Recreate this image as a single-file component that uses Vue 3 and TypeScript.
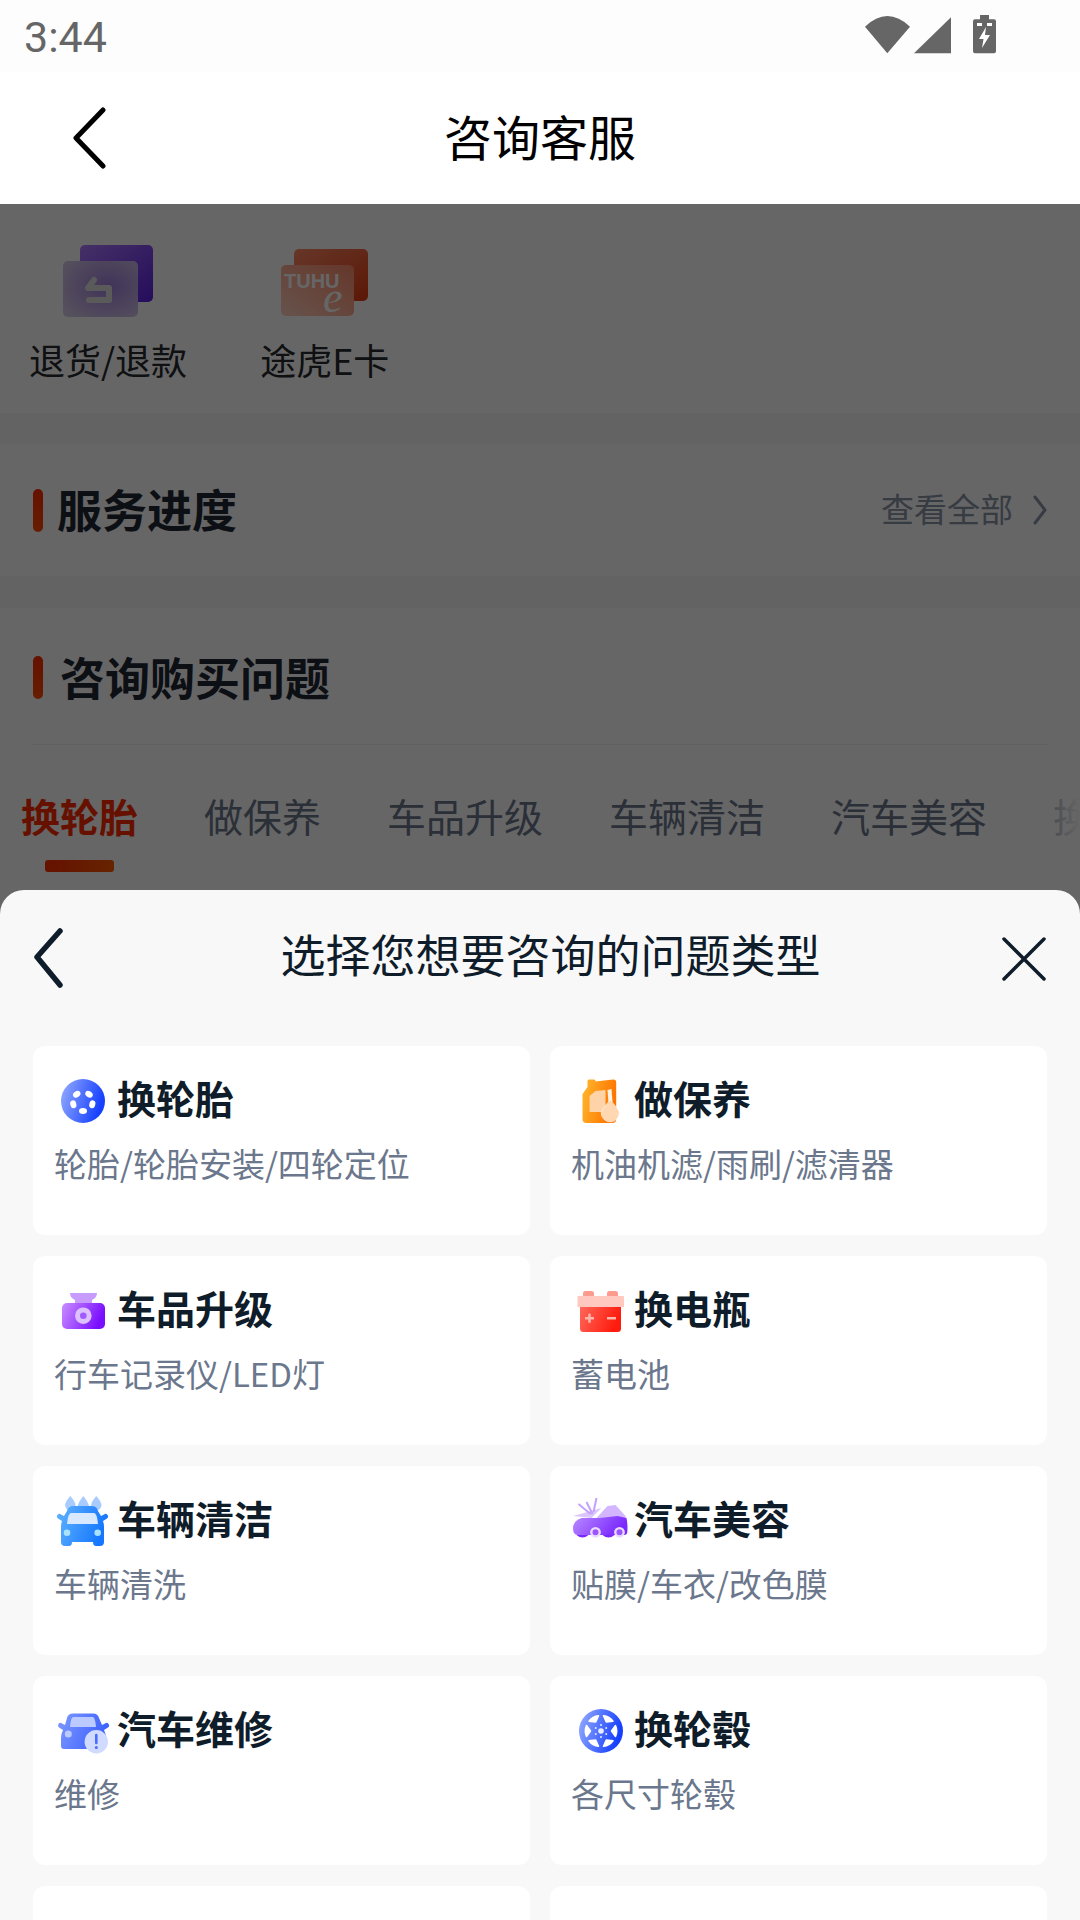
<script setup lang="ts">
const tabs: string[] = ['换轮胎', '做保养', '车品升级', '车辆清洁', '汽车美容', '换电瓶']
interface Category { key: string; title: string; sub: string }
const categories: Category[] = [
  { key: 'tire', title: '换轮胎', sub: '轮胎/轮胎安装/四轮定位' },
  { key: 'oil', title: '做保养', sub: '机油机滤/雨刷/滤清器' },
  { key: 'camera', title: '车品升级', sub: '行车记录仪/LED灯' },
  { key: 'battery', title: '换电瓶', sub: '蓄电池' },
  { key: 'wash', title: '车辆清洁', sub: '车辆清洗' },
  { key: 'beauty', title: '汽车美容', sub: '贴膜/车衣/改色膜' },
  { key: 'repair', title: '汽车维修', sub: '维修' },
  { key: 'rim', title: '换轮毂', sub: '各尺寸轮毂' },
  { key: 'none', title: '', sub: '' },
  { key: 'none2', title: '', sub: '' }
]
</script>

<template>
  <div class="phone">
    <header class="status">
      <span class="time">3:44</span>
      <svg class="status-icons" width="131" height="40" viewBox="0 0 131 40">
        <path d="M0 11.7 Q22.3 -9.5 45 11.7 L22.3 38.3 Z" fill="#666" />
        <path d="M49 38.3 L86 2.3 V38.3 Z" fill="#666" />
        <path d="M115 0 h9 v4.3 h5 q2 0 2 2 v30 q0 2 -2 2 h-19 q-2 0 -2 -2 v-30 q0 -2 2 -2 h5 Z" fill="#666" />
        <path d="M112 8 h5 v3 h-5 Z M122 8 h5 v3 h-5 Z" fill="#fff" />
        <path d="M121 12 L114 24 H118.500 L117 33 L125 20 H120 Z" fill="#fff" />
      </svg>
    </header>

    <nav class="nav">
      <svg class="nav-back" width="34" height="62" viewBox="0 0 34 62">
        <path d="M31 3 L4 31 L31 59" fill="none" stroke="#000" stroke-width="5" stroke-linecap="round" stroke-linejoin="round" />
      </svg>
      <h1 class="nav-title">咨询客服</h1>
    </nav>

    <main class="content">
      <section class="quick">
        <div class="quick-item">
          <svg class="quick-icon" width="100" height="80" viewBox="8 0 100 80">
            <defs>
              <linearGradient id="refundBack" x1="0" y1="0" x2="1" y2="1">
                <stop offset="0" stop-color="#b07aff" />
                <stop offset="1" stop-color="#5a20e6" />
              </linearGradient>
              <radialGradient id="refundFront" cx="0.6" cy="0.45" r="0.75">
                <stop offset="0" stop-color="#a27fe0" />
                <stop offset="1" stop-color="#d8cde8" />
              </radialGradient>
            </defs>
            <rect x="30" y="2" width="73" height="57" rx="5" fill="url(#refundBack)" />
            <rect x="13" y="18" width="75" height="56" rx="5" fill="url(#refundFront)" />
            <path d="M44 37 L38 45 H59 V57 H39" fill="none" stroke="#e4e0e4" stroke-width="6" stroke-linecap="round" stroke-linejoin="round" />
          </svg>
          <span>退货/退款</span>
        </div>
        <div class="quick-item">
          <svg class="quick-icon" width="100" height="80" viewBox="5 0 100 80">
            <defs>
              <linearGradient id="ecardBack" x1="0" y1="0" x2="1" y2="1">
                <stop offset="0" stop-color="#ff8a66" />
                <stop offset="1" stop-color="#e63a10" />
              </linearGradient>
              <linearGradient id="ecardFront" x1="1" y1="0" x2="0" y2="1">
                <stop offset="0" stop-color="#ff8a6a" />
                <stop offset="1" stop-color="#ffd0c0" />
              </linearGradient>
            </defs>
            <rect x="24" y="6" width="74" height="52" rx="5" fill="url(#ecardBack)" />
            <rect x="11" y="22" width="73" height="51" rx="5" fill="url(#ecardFront)" />
            <text x="14" y="45" class="tuhu">TUHU</text>
            <text x="53" y="69" class="tuhu-e">e</text>
          </svg>
          <span>途虎E卡</span>
        </div>
      </section>

      <section class="progress">
        <div class="heading">
          <i class="mark"></i>
          <h2>服务进度</h2>
        </div>
        <div class="more">
          <span>查看全部</span>
          <svg width="14" height="30" viewBox="0 0 14 30">
            <path d="M2 2 L12 15 L2 28" fill="none" stroke="#8a94a6" stroke-width="3" stroke-linecap="round" stroke-linejoin="round" />
          </svg>
        </div>
      </section>

      <section class="consult">
        <div class="heading consult-heading">
          <i class="mark"></i>
          <h2>咨询购买问题</h2>
        </div>
        <div class="tabs">
          <div v-for="(tab, i) in tabs" :key="tab" class="tab" :class="{ active: i === 0 }">
            <span>{{ tab }}</span>
            <i v-if="i === 0" class="tab-bar"></i>
          </div>
          <div class="tabs-fade"></div>
        </div>
      </section>

      <div class="scrim"></div>

      <aside class="sheet">
        <div class="sheet-head">
          <svg width="30" height="60" viewBox="0 0 30 60">
            <path d="M27 3 L4 29 L27 57" fill="none" stroke="#0f1c2a" stroke-width="5.500" stroke-linecap="round" stroke-linejoin="round" />
          </svg>
          <h3>选择您想要咨询的问题类型</h3>
          <svg width="44" height="44" viewBox="0 0 44 44">
            <path d="M2 2 L42 42 M42 2 L2 42" fill="none" stroke="#0f1c2a" stroke-width="3.500" stroke-linecap="round" />
          </svg>
        </div>

        <div class="grid">
          <article v-for="c in categories" :key="c.key" class="card">
            <div v-if="c.title" class="card-row">
              <svg class="card-icon" width="64" height="60" viewBox="0 0 64 60">
                <defs>
                  <linearGradient :id="'g-' + c.key" x1="0" y1="0" x2="1" y2="0.300">
                    <stop offset="0" :stop-color="c.key === 'oil' ? '#ffb92e' : c.key === 'camera' ? '#c98fff' : c.key === 'battery' ? '#ff6a5c' : c.key === 'wash' ? '#62b4ff' : c.key === 'beauty' ? '#b98aff' : c.key === 'repair' ? '#7f9bff' : '#98aeff'" />
                    <stop offset="1" :stop-color="c.key === 'oil' ? '#ff7400' : c.key === 'camera' ? '#7a0eff' : c.key === 'battery' ? '#ff1c0e' : c.key === 'wash' ? '#1577ff' : c.key === 'beauty' ? '#7a28ff' : c.key === 'repair' ? '#3e62ff' : '#1640ff'" />
                  </linearGradient>
                </defs>

                <g v-if="c.key === 'tire'">
                  <circle cx="29" cy="31" r="22" :fill="'url(#g-' + c.key + ')'" />
                  <g fill="#fff">
                    <ellipse cx="22.700" cy="24.300" rx="4" ry="3" transform="rotate(-35 22.700 24.300)" />
                    <ellipse cx="35" cy="24.300" rx="4" ry="3" transform="rotate(35 35 24.300)" />
                    <ellipse cx="19.300" cy="34.300" rx="3" ry="4" transform="rotate(-15 19.300 34.300)" />
                    <ellipse cx="38.300" cy="34.300" rx="3" ry="4" transform="rotate(15 38.300 34.300)" />
                    <ellipse cx="29" cy="41" rx="4" ry="3" />
                  </g>
                </g>

                <g v-else-if="c.key === 'oil'" transform="translate(-1.500 0)">
                  <path d="M13 24 L18 17 V11 q0 -1.500 1.500 -1.500 h5 q1.500 0 1.500 2 L39 10 L44 9.500 q2.700 0 2.700 3 V49 q0 4 -4 4 H17 q-4 0 -4 -4 Z" :fill="'url(#g-' + c.key + ')'" />
                  <path d="M20 26 L26 21 L36 20 V42 H20 Z" fill="#ffd3a8" />
                  <path d="M38 20 L42 19 L43 32 L39 33 Z" fill="#fff3e2" />
                  <path d="M40.700 30 Q50 40 49.700 43 A9 9 0 0 1 31.700 43 Q31.500 40 40.700 30 Z" fill="#ffd7b0" stroke="#fff" stroke-opacity="0.500" />
                </g>

                <g v-else-if="c.key === 'camera'">
                  <path d="M16 13 H43 Q43 18 38 20 V23 H21 V20 Q16 18 16 13 Z" fill="#c89cff" />
                  <rect x="8" y="23" width="43" height="26" rx="5" :fill="'url(#g-' + c.key + ')'" />
                  <circle cx="29.300" cy="35.700" r="8.300" fill="#dcc0ff" />
                  <circle cx="29.300" cy="35.700" r="3.300" fill="#a05cff" />
                </g>

                <g v-else-if="c.key === 'battery'" transform="translate(-1 0)">
                  <rect x="13" y="11" width="11" height="7" rx="2.500" fill="#ff9a8e" />
                  <rect x="37" y="11" width="11" height="7" rx="2.500" fill="#ff9a8e" />
                  <rect x="10" y="24" width="41" height="28" rx="3.500" :fill="'url(#g-' + c.key + ')'" />
                  <path d="M8 16 H53 Q54 16 54 17 V27 H7.500 V17 Q7.500 16 8 16 Z" fill="#ffc9c0" />
                  <path d="M15 38.300 H24 M19.500 33.800 V42.800 M37 38.300 H46" stroke="#ffb5aa" stroke-width="2.500" fill="none" />
                </g>

                <g v-else-if="c.key === 'wash'">
                  <g fill="#a8ccff">
                    <path d="M16.300 6 Q21.500 12 21.500 15 A5.200 5.200 0 0 1 11.100 15 Q11.100 12 16.300 6 Z" />
                    <path d="M29.300 6 Q35 13 35 17 A5.700 5.700 0 0 1 23.600 17 Q23.600 13 29.300 6 Z" />
                    <path d="M42.300 6 Q47.500 12 47.500 15 A5.200 5.200 0 0 1 37.100 15 Q37.100 12 42.300 6 Z" />
                  </g>
                  <path d="M13 21 Q14 16 20 16 H37 Q43 16 44 21 L47 26 L50 24.500 a2.500 2.500 0 0 1 3 4 L49 31 Q50 34 50 37 V52 q0 4 -4 4 h-4 q-3 0 -3 -4 H18 q0 4 -3 4 h-4 q-4 0 -4 -4 V37 q0 -3 1 -6 L4 28.500 a2.500 2.500 0 0 1 3 -4 L10 26 Z" :fill="'url(#g-' + c.key + ')'" />
                  <path d="M17 23 H40 Q43 23 44 34 H13 Q14 23 17 23 Z" fill="#d7e8ff" />
                  <circle cx="13" cy="42.700" r="3.300" fill="#a9e2ff" />
                  <circle cx="43.700" cy="42.700" r="3.300" fill="#a9e2ff" />
                </g>

                <g v-else-if="c.key === 'beauty'" transform="translate(-1.500 0)">
                  <path d="M3.500 26 L32 18 L22 28 Z" fill="#dcc6ff" />
                  <path d="M9 14 L21 24 M17 12 L23 24 M27 8 L24 22" stroke="#c4a0ff" stroke-width="2" fill="none" />
                  <path d="M27 28 L38 16 L46 15 L56 26 V30 H27 Z" fill="#d3b6ff" />
                  <path d="M7 45 Q13 50 19 45 H33 Q39 50 45 45 Z" fill="#7a28ff" />
                  <path d="M3.500 38 Q3.500 31 12 28 L30 28 L48 26 L57 28 Q58.500 35 57.700 43 Q57 45 55 45 H8 Q3.500 45 3.500 38 Z" :fill="'url(#g-' + c.key + ')'" />
                  <circle cx="26" cy="42.300" r="4.200" fill="#9a55ff" stroke="#ead9ff" stroke-width="2.400" />
                  <circle cx="50" cy="42.300" r="4.200" fill="#9a55ff" stroke="#ead9ff" stroke-width="2.400" />
                </g>

                <g v-else-if="c.key === 'repair'">
                  <path d="M13 18 Q14 13.500 19 13.500 H39 Q44 13.500 45 18 L48 25 L51 23.500 a2.500 2.500 0 0 1 3 4 L50 30 Q52 34 52 38 V46 q0 3 -3 3 H10 q-3 0 -3 -3 V38 Q7 34 9 30 L5 27.500 a2.500 2.500 0 0 1 3 -4 L11 25 Z" :fill="'url(#g-' + c.key + ')'" />
                  <path d="M19 17 H39 Q41 17 42 27 H16 Q17 17 19 17 Z" fill="#bccbff" />
                  <circle cx="14.300" cy="34" r="3.500" fill="#bccbff" />
                  <circle cx="42.300" cy="41.700" r="11.700" fill="#d0dbff" />
                  <path d="M42.300 35 V43" stroke="#4a6bff" stroke-width="2.600" stroke-linecap="round" />
                  <circle cx="42.300" cy="47.500" r="1.500" fill="#4a6bff" />
                </g>

                <g v-else-if="c.key === 'rim'">
                  <circle cx="30" cy="31" r="22" :fill="'url(#g-' + c.key + ')'" />
                  <g transform="translate(30 31)">
                    <path v-for="a in [0, 60, 120, 180, 240, 300]" :key="a" d="M10.500 0 L14.500 -5.500 Q17 0 14.500 5.500 Z" fill="#fff" stroke="#fff" stroke-width="1.500" stroke-linejoin="round" :transform="'rotate(' + a + ')'" />
                    <circle r="2.800" fill="#e8edff" />
                    <g v-for="a in [30, 90, 150, 210, 270, 330]" :key="'d' + a" :transform="'rotate(' + a + ')'">
                      <circle cx="6" cy="0" r="1" fill="#e8edff" />
                    </g>
                  </g>
                </g>
              </svg>
              <h4>{{ c.title }}</h4>
            </div>
            <p v-if="c.sub">{{ c.sub }}</p>
          </article>
        </div>
      </aside>
    </main>
  </div>
</template>

<style>
html,
body {
  margin: 0;
  background: #fff;
}
</style>

<style scoped>
.phone {
  width: 1080px;
  height: 1920px;
  display: flex;
  flex-direction: column;
  overflow: hidden;
  background: #fff;
  font-family: 'Noto Sans CJK SC', 'Noto Sans', sans-serif;
}
.status {
  height: 72px;
  flex: none;
  display: flex;
  align-items: center;
  justify-content: space-between;
  padding: 0 84px 0 24px;
  background: #fdfdfd;
}
.time {
  font-family: Roboto, sans-serif;
  font-size: 43px;
  font-weight: 400;
  margin-top: 2px;
  color: #666;
}
.status-icons {
  display: block;
  margin-bottom: 2px;
}
.nav {
  height: 132px;
  flex: none;
  position: relative;
  display: flex;
  align-items: center;
  justify-content: center;
  background: #fff;
}
.nav-back {
  position: absolute;
  left: 72px;
  top: 35px;
}
.nav-title {
  margin: 0 0 7px;
  font-size: 48px;
  font-weight: 400;
  line-height: 64px;
  color: #000;
}
.content {
  flex: 1;
  position: relative;
  overflow: hidden;
  background: #f7f7f7;
}
.quick {
  height: 209px;
  box-sizing: border-box;
  display: flex;
  gap: 73px;
  margin-bottom: 31px;
  padding: 39px 0 0 29px;
  background: #fff;
}
.quick-item {
  display: flex;
  flex-direction: column;
  align-items: center;
  font-size: 36px;
  line-height: 50px;
  color: #26282c;
}
.quick-icon {
  display: block;
  margin-bottom: 11px;
}
.tuhu {
  font-family: 'Liberation Sans', sans-serif;
  font-size: 20px;
  font-weight: 700;
  fill: #fff;
}
.tuhu-e {
  font-family: 'Liberation Serif', serif;
  font-style: italic;
  font-size: 44px;
  fill: #fff;
}
.progress {
  height: 132px;
  box-sizing: border-box;
  display: flex;
  align-items: center;
  justify-content: space-between;
  padding: 0 33px;
  background: #fff;
}
.heading {
  display: flex;
  align-items: center;
  gap: 14px;
}
.heading h2 {
  margin: 0 0 2px;
  font-size: 45px;
  line-height: 60px;
  font-weight: 700;
  color: #1f2a36;
}
.mark {
  display: block;
  width: 10px;
  height: 43px;
  border-radius: 5px;
  background: linear-gradient(180deg, #ff2c00, #ff4a00);
}
.more {
  display: flex;
  align-items: center;
  gap: 20px;
  font-size: 33px;
  color: #8a94a6;
}
.more span {
  margin-bottom: 4px;
}
.more svg {
  display: block;
}
.consult {
  margin-top: 32px;
  height: 1000px;
  background: #fff;
}
.consult-heading {
  height: 137px;
  box-sizing: border-box;
  margin: 0 33px;
  padding-top: 3px;
  gap: 17px;
  border-bottom: 1px solid #ededed;
}
.tabs {
  position: relative;
  display: flex;
  gap: 66px;
  padding: 46px 0 0 21px;
  overflow: hidden;
}
.tab {
  flex: none;
  display: flex;
  flex-direction: column;
  align-items: center;
  font-size: 39px;
  line-height: 50px;
  color: #6b778c;
}
.tab span {
  margin-top: -1px;
}
.tab.active {
  font-weight: 700;
  color: #ff2c00;
}
.tab-bar {
  display: block;
  width: 69px;
  height: 12px;
  margin-top: 20px;
  border-radius: 3px;
  background: linear-gradient(90deg, #ff2c00, #ff5a00);
}
.tabs-fade {
  position: absolute;
  top: 0;
  right: 0;
  bottom: 0;
  width: 40px;
  background: linear-gradient(90deg, rgba(255, 255, 255, 0.3), #fff);
}
.scrim {
  position: absolute;
  inset: 0;
  background: rgba(0, 0, 0, 0.6);
}
.sheet {
  position: absolute;
  left: 0;
  right: 0;
  top: 686px;
  bottom: 0;
  overflow: hidden;
  border-radius: 24px 24px 0 0;
  background: #f8f8f9;
}
.sheet-head {
  height: 156px;
  box-sizing: border-box;
  display: flex;
  align-items: flex-start;
  justify-content: space-between;
  padding: 38px 34px 0 33px;
}
.sheet-head svg {
  display: block;
  flex: none;
}
.sheet-head svg:last-child {
  margin-top: 9px;
}
.sheet-head h3 {
  margin: -3px 0 0 36px;
  font-size: 45px;
  line-height: 58px;
  font-weight: 400;
  color: #0f1c2a;
}
.grid {
  display: grid;
  grid-template-columns: 497px 497px;
  grid-auto-rows: 189px;
  column-gap: 20px;
  row-gap: 21px;
  padding: 0 33px;
}
.card {
  box-sizing: border-box;
  padding: 24px 21px 0;
  border-radius: 12px;
  background: #fff;
}
.card-row {
  display: flex;
  height: 60px;
  align-items: flex-start;
}
.card-icon {
  display: block;
  flex: none;
  margin-right: -1px;
}
.card h4 {
  margin: -1px 0 0;
  font-size: 39px;
  line-height: 56px;
  font-weight: 700;
  color: #0f1c2a;
}
.card p {
  margin: 11px 0 0;
  font-size: 33px;
  line-height: 44px;
  color: #6b778c;
}
</style>
